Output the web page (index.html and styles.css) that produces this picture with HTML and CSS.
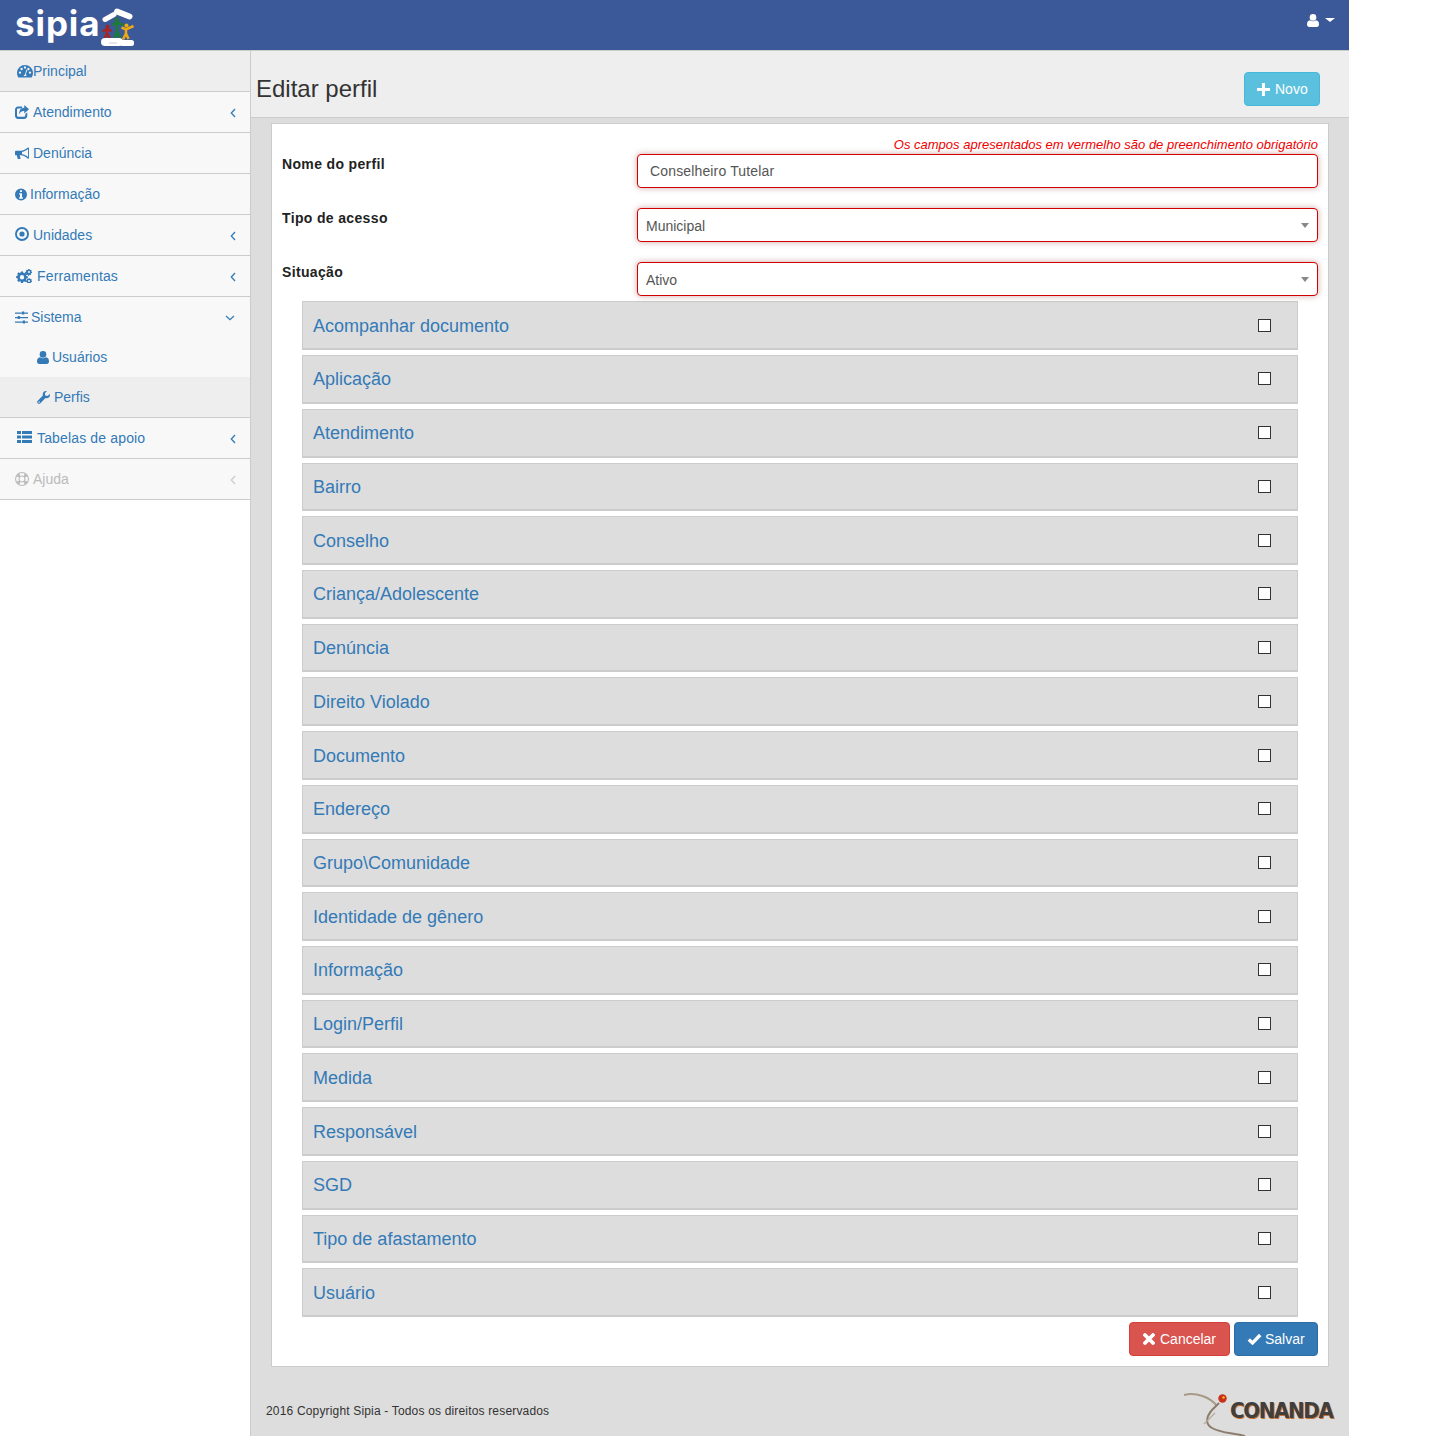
FILE: index.html
```html
<!DOCTYPE html>
<html lang="pt-BR">
<head>
<meta charset="utf-8">
<title>Editar perfil</title>
<link rel="stylesheet" href="styles.css">
</head>
<body>
<svg class="defs" width="0" height="0" aria-hidden="true">
  <symbol id="i-dash" viewBox="0 0 16 14"><path fill-rule="evenodd" d="M8 1a8 8 0 0 0-8 8c0 1.6.4 3 1.2 4.2.2.3.5.4.8.4h12c.3 0 .6-.1.8-.4C15.6 12 16 10.600 16 9a8 8 0 0 0-8-8zM3 9.800a1.200 1.200 0 1 1 0-2.400 1.200 1.200 0 0 1 0 2.400zm1.600-3.600a1.200 1.200 0 1 1 0-2.400 1.200 1.200 0 0 1 0 2.400zM8 4.600A1.200 1.200 0 1 1 8 2.200a1.200 1.200 0 0 1 0 2.400zm1.500 6.800a1.800 1.800 0 0 1-3 0l1.500-1 1.400-4.800 1 .3L8.900 10c.3.300.5.800.6 1.400zm1.900-5.200a1.200 1.200 0 1 1 0-2.400 1.200 1.200 0 0 1 0 2.400zm1.600 3.600a1.200 1.200 0 1 1 0-2.400 1.200 1.200 0 0 1 0 2.400z"/></symbol>
  <symbol id="i-share" viewBox="0 0 14 14"><path d="M3 1.500h4.200v2H3.200c-.7 0-1.200.5-1.200 1.200v5.900c0 .7.5 1.200 1.200 1.200h5.900c.7 0 1.200-.5 1.200-1.200V9l2-1.600v3.400c0 1.800-1.400 3.200-3.200 3.200H3c-1.700 0-3-1.400-3-3.200V4.700c0-1.800 1.300-3.200 3-3.200z"/><path d="M9.300 0 14 4.200 9.300 8.500V6.100C7 6 5.200 6.500 4.400 9.500 3.800 6 5.400 3 9.300 2.800z"/></symbol>
  <symbol id="i-horn" viewBox="0 0 15 13"><path fill-rule="evenodd" d="M13.800 0h.4c.4 0 .8.300.8.800v10.400c0 .5-.4.800-.8.800h-.4C11.500 10 9 8.700 6 8.500H5l.9 3.200c.1.400-.2.800-.6.800H3.500c-.3 0-.5-.2-.6-.4L1.900 8.500H1c-.6 0-1-.4-1-1v-3c0-.6.400-1 1-1h5c3 0 5.500-1.500 7.800-3.500zM14 1.800C12.300 3.200 10 4.500 7.500 4.800v2.400c2.500.3 4.800 1.600 6.500 3z"/></symbol>
  <symbol id="i-info" viewBox="0 0 14 14"><path fill-rule="evenodd" d="M7 0a7 7 0 1 1 0 14A7 7 0 0 1 7 0zM5.800 1.900v2.300h2.400V1.900zM4.800 5.600v1.500h1v3.200h-1v1.600h4.400v-1.600h-1V5.600z"/></symbol>
  <symbol id="i-dot" viewBox="0 0 14 14"><path fill-rule="evenodd" d="M7 0a7 7 0 1 1 0 14A7 7 0 0 1 7 0zm0 1.900a5.100 5.100 0 1 0 0 10.200A5.100 5.100 0 0 0 7 1.900zM7 4.400a2.600 2.600 0 1 1 0 5.200 2.600 2.600 0 0 1 0-5.200z"/></symbol>
  <symbol id="i-cogs" viewBox="0 0 16 14"><path fill-rule="evenodd" d="M5 2.500h2l.3 1.300.9.400 1.200-.7 1.400 1.400-.7 1.200.4.900 1.300.3v2l-1.300.3-.4.900.7 1.200-1.400 1.400-1.200-.7-.9.400L7 13.900H5l-.3-1.300-.9-.4-1.200.7-1.400-1.400.7-1.200-.4-.9L.2 9.100v-2l1.300-.3.4-.9-.7-1.200 1.400-1.400 1.200.7.9-.4zM6 6a2.200 2.200 0 1 0 0 4.400A2.200 2.200 0 0 0 6 6z"/><path fill-rule="evenodd" d="M12.500 0h1l.2.800.6.300.7-.4.700.7-.4.700.3.600.4.200v1l-.8.200-.3.600.4.700-.7.700-.7-.4-.6.300-.2.800h-1l-.2-.8-.6-.3-.7.4-.7-.7.4-.7-.3-.6-.8-.2v-1l.8-.2.3-.6-.4-.7.700-.7.700.4.600-.3zm.5 1.900a1 1 0 1 0 0 2 1 1 0 0 0 0-2zM12.500 9h1l.2.800.6.300.7-.4.700.7-.4.700.3.600.4.200v1l-.8.200-.3.600-.2.300h-3.400l-.2-.3-.3-.6-.8-.2v-1l.8-.2.3-.6-.4-.7.7-.7.7.4.6-.3zm.5 1.900a1 1 0 1 0 0 2 1 1 0 0 0 0-2z"/></symbol>
  <symbol id="i-sliders" viewBox="0 0 13 13"><path d="M0 1.500h7V.6h2.200v.9H13v1.200H9.200v.9H7v-.9H0zM0 6h2.700v-.9h2.200V6H13v1.200H4.900v.9H2.700v-.9H0zM0 10.500h7.800v-.9H10v.9h3v1.200h-3v.9H7.800v-.9H0z"/></symbol>
  <symbol id="i-user" viewBox="0 0 12 13"><circle cx="6" cy="3.400" r="3.300"/><path d="M3 6.300c.8.600 1.900 1 3 1s2.200-.4 3-1c2 .1 3 1.900 3 4.200 0 1.500-1 2.500-2.200 2.500H2.200C1 13 0 12 0 10.500c0-2.300 1-4.100 3-4.200z"/></symbol>
  <symbol id="i-wrench" viewBox="0 0 14 14"><path fill-rule="evenodd" d="M13.900 3.200c.3 1.600-.1 3-1.200 3.900-1.100.8-2.400 1-3.600.5L3.600 13.200c-.8.800-1.900.800-2.700 0l-.1-.1c-.8-.8-.8-1.900 0-2.700l5.600-5.500c-.5-1.200-.3-2.500.5-3.600C7.800.2 9.200-.2 10.700.1L8.500 2.300l.3 2.500 2.500.5zM2.300 11a.8.8 0 1 0 0 1.600.8.800 0 0 0 0-1.600z"/></symbol>
  <symbol id="i-list" viewBox="0 0 15 12"><path d="M0 0h4v3H0zM5 0h10v3H5zM0 4.500h4v3H0zM5 4.500h10v3H5zM0 9h4v3H0zM5 9h10v3H5z"/></symbol>
  <symbol id="i-ring" viewBox="0 0 14 14"><path fill-rule="evenodd" d="M7 0a7 7 0 1 1 0 14A7 7 0 0 1 7 0zM4.400 1.700 5.300 3.900a3.500 3.500 0 0 1 3.400 0l.9-2.200a6 6 0 0 0-5.200 0zM1.700 9.600 3.900 8.700a3.500 3.500 0 0 1 0-3.400l-2.200-.9a6 6 0 0 0 0 5.200zM9.600 12.300 8.700 10.100a3.500 3.500 0 0 1-3.400 0l-.9 2.200a6 6 0 0 0 5.200 0zM12.300 4.400l-2.200.9a3.500 3.500 0 0 1 0 3.400l2.200.9a6 6 0 0 0 0-5.200zM7 4.600a2.400 2.400 0 1 0 0 4.800 2.400 2.400 0 0 0 0-4.800z"/></symbol>
  <symbol id="i-plus" viewBox="0 0 13 13"><path d="M5 0h3v5h5v3H8v5H5V8H0V5h5z"/></symbol>
  <symbol id="i-x" viewBox="0 0 12 12"><path d="M2 2l8 8M10 2l-8 8" fill="none" stroke="#fff" stroke-width="3.800" stroke-linecap="round"/></symbol>
  <symbol id="i-check" viewBox="0 0 15 12"><path d="M1.800 6.500 5.500 10 13.200 2" fill="none" stroke="#fff" stroke-width="3.300"/></symbol>
  <symbol id="i-chev-l" viewBox="0 0 6 10"><path d="M5 1 1.300 5 5 9" fill="none" stroke="currentColor" stroke-width="1.300"/></symbol>
  <symbol id="i-chev-d" viewBox="0 0 10 6"><path d="M1 1l4 3.700L9 1" fill="none" stroke="currentColor" stroke-width="1.300"/></symbol>
</svg>

<div class="page">
  <header class="navbar">
    <a class="brand">
      <span class="brand-name">sipia</span>
      <svg class="brand-mark" width="36" height="38" viewBox="0 0 36 38" aria-hidden="true">
        <path d="M5 11.500 14 6.500" stroke="#fff" stroke-width="5" stroke-linecap="round" fill="none"/>
        <path d="M17 3.500 29.500 8.500" stroke="#fff" stroke-width="6" stroke-linecap="round" fill="none"/>
        <path d="M12 17 17 14.500 24 17M17 14.500V23L14.500 30M17 23 20 30" stroke="#1d7a3a" stroke-width="2.800" fill="none"/>
        <circle cx="17" cy="11.500" r="2.300" fill="#1d7a3a"/>
        <path d="M2.500 23.500 7 21 11.500 23M7 21V25.500L4.500 30M7 25.500 10 30" stroke="#a82424" stroke-width="2.500" fill="none"/>
        <circle cx="7.500" cy="18.500" r="2" fill="#a82424"/>
        <path d="M21.500 19.500 26 21.500 33.500 18M26 21V25.500L23 31.500M26 25.500 28.500 31" stroke="#eeaa11" stroke-width="2.500" fill="none"/>
        <circle cx="26.500" cy="17.500" r="2" fill="#eeaa11"/>
        <rect x="1" y="30" width="22" height="8" rx="4" fill="#fff"/>
        <rect x="20" y="32" width="14" height="6" rx="2.500" fill="#fff"/>
        <path d="M9 35h8" stroke="#c9d0dd" stroke-width="1"/>
      </svg>
    </a>
    <a class="user-menu">
      <svg class="ico-user" aria-hidden="true"><use href="#i-user"/></svg>
      <span class="caret"></span>
    </a>
  </header>

  <div class="layout">
    <nav class="sidebar">
      <ul class="menu">
        <li class="menu-item is-current"><a class="menu-link"><svg class="ico ico-dash"><use href="#i-dash"/></svg><span>Principal</span></a></li>
        <li class="menu-item"><a class="menu-link"><svg class="ico ico-share"><use href="#i-share"/></svg><span>Atendimento</span><svg class="chev"><use href="#i-chev-l"/></svg></a></li>
        <li class="menu-item"><a class="menu-link"><svg class="ico ico-horn"><use href="#i-horn"/></svg><span>Denúncia</span></a></li>
        <li class="menu-item"><a class="menu-link"><svg class="ico ico-info"><use href="#i-info"/></svg><span>Informação</span></a></li>
        <li class="menu-item"><a class="menu-link"><svg class="ico ico-dot"><use href="#i-dot"/></svg><span>Unidades</span><svg class="chev"><use href="#i-chev-l"/></svg></a></li>
        <li class="menu-item"><a class="menu-link"><svg class="ico ico-cogs"><use href="#i-cogs"/></svg><span class="text-wide">Ferramentas</span><svg class="chev"><use href="#i-chev-l"/></svg></a></li>
        <li class="menu-item">
          <a class="menu-link menu-open"><svg class="ico ico-sliders"><use href="#i-sliders"/></svg><span>Sistema</span><svg class="chev-d"><use href="#i-chev-d"/></svg></a>
          <ul class="submenu">
            <li><a class="sub-link"><svg class="ico ico-sub-user"><use href="#i-user"/></svg>Usuários</a></li>
            <li><a class="sub-link is-current"><svg class="ico ico-wrench"><use href="#i-wrench"/></svg>Perfis</a></li>
          </ul>
        </li>
        <li class="menu-item"><a class="menu-link"><svg class="ico ico-list"><use href="#i-list"/></svg><span class="text-wide">Tabelas de apoio</span><svg class="chev"><use href="#i-chev-l"/></svg></a></li>
        <li class="menu-item is-muted"><a class="menu-link"><svg class="ico ico-ring"><use href="#i-ring"/></svg><span>Ajuda</span><svg class="chev"><use href="#i-chev-l"/></svg></a></li>
      </ul>
    </nav>

    <main class="content">
      <div class="page-head">
        <h1 class="page-title">Editar perfil</h1>
        <a class="btn btn-info"><svg class="btn-ico ico-plus"><use href="#i-plus"/></svg>Novo</a>
      </div>

      <section class="card">
        <p class="required-note">Os campos apresentados em vermelho são de preenchimento obrigatório</p>
        <div class="field">
          <label class="field-label">Nome do perfil</label>
          <div class="control control-text">Conselheiro Tutelar</div>
        </div>
        <div class="field">
          <label class="field-label">Tipo de acesso</label>
          <div class="control control-select">Municipal<span class="select-arrow"></span></div>
        </div>
        <div class="field field-last">
          <label class="field-label">Situação</label>
          <div class="control control-select">Ativo<span class="select-arrow"></span></div>
        </div>

        <div class="modules">
          <div class="module"><a class="module-name">Acompanhar documento</a><span class="check"></span></div>
          <div class="module"><a class="module-name">Aplicação</a><span class="check"></span></div>
          <div class="module"><a class="module-name">Atendimento</a><span class="check"></span></div>
          <div class="module"><a class="module-name">Bairro</a><span class="check"></span></div>
          <div class="module"><a class="module-name">Conselho</a><span class="check"></span></div>
          <div class="module"><a class="module-name">Criança/Adolescente</a><span class="check"></span></div>
          <div class="module"><a class="module-name">Denúncia</a><span class="check"></span></div>
          <div class="module"><a class="module-name">Direito Violado</a><span class="check"></span></div>
          <div class="module"><a class="module-name">Documento</a><span class="check"></span></div>
          <div class="module"><a class="module-name">Endereço</a><span class="check"></span></div>
          <div class="module"><a class="module-name">Grupo\Comunidade</a><span class="check"></span></div>
          <div class="module"><a class="module-name">Identidade de gênero</a><span class="check"></span></div>
          <div class="module"><a class="module-name">Informação</a><span class="check"></span></div>
          <div class="module"><a class="module-name">Login/Perfil</a><span class="check"></span></div>
          <div class="module"><a class="module-name">Medida</a><span class="check"></span></div>
          <div class="module"><a class="module-name">Responsável</a><span class="check"></span></div>
          <div class="module"><a class="module-name">SGD</a><span class="check"></span></div>
          <div class="module"><a class="module-name">Tipo de afastamento</a><span class="check"></span></div>
          <div class="module"><a class="module-name">Usuário</a><span class="check"></span></div>
        </div>

        <div class="actions">
          <a class="btn btn-danger"><svg class="btn-ico ico-x"><use href="#i-x"/></svg>Cancelar</a>
          <a class="btn btn-primary"><svg class="btn-ico ico-check"><use href="#i-check"/></svg>Salvar</a>
        </div>
      </section>

      <footer class="footer">
        <span class="copyright">2016 Copyright Sipia - Todos os direitos reservados</span>
        <div class="conanda">
          <svg class="conanda-mark" width="66" height="44" viewBox="0 0 66 44" aria-hidden="true">
            <path d="M0 3C12 0 26 5 33 14" fill="none" stroke="#a89a85" stroke-width="2"/>
            <path d="M35 11 28 18C22 25 21 32 28 36 36 41 50 41 61 44" fill="none" stroke="#8b7d6b" stroke-width="2"/>
            <path d="M31 21 20 32" fill="none" stroke="#b5ab9a" stroke-width="1.200"/>
            <circle cx="38.500" cy="6.500" r="4.200" fill="#c9301c"/>
            <circle cx="39.500" cy="5.500" r="1.200" fill="#f0c020"/>
          </svg>
          <span class="conanda-name">CONANDA</span>
        </div>
      </footer>
    </main>
  </div>
</div>
</body>
</html>
```

FILE: styles.css
```css
* { box-sizing: border-box; }
html, body { margin: 0; padding: 0; background: #fff; }
body { font-family: "Liberation Sans", Arial, sans-serif; font-size: 14px; color: #333; line-height: 20px; }
a { color: #337ab7; text-decoration: none; }
ul { list-style: none; margin: 0; padding: 0; }
.defs { position: absolute; }

.page { width: 1349px; height: 1436px; overflow: hidden; background: #ddd; }

/* navbar */
.navbar { height: 51px; background: #3b5998; border-bottom: 1px solid #ccc; display: flex; justify-content: space-between; padding: 0 14px 0 15px; }
.brand { display: flex; align-items: flex-start; color: #fff; }
.brand-name { font-family: "Inter", sans-serif; font-weight: 700; font-size: 35px; line-height: 46px; letter-spacing: .9px; width: 85px; white-space: nowrap; }
.brand-mark { margin: 8px 0 0 0; flex: none; }
.user-menu { display: flex; align-items: center; height: 40px; color: #fff; gap: 6px; }
.ico-user { width: 12px; height: 13px; fill: #fff; }
.caret { width: 0; height: 0; border-top: 4px solid #fff; border-left: 5px solid transparent; border-right: 5px solid transparent; }

/* layout */
.layout { display: flex; height: 1385px; }
.sidebar { width: 251px; flex: none; background: #fff; border-right: 1px solid #ccc; }
.menu-item { border-bottom: 1px solid #ccc; background: #f8f8f8; }
.menu-link { display: flex; align-items: center; height: 40px; padding: 0 15px; position: relative; }
.menu-item.is-current { background: #eee; }
.is-muted .menu-link { color: #bbb; }
.text-wide { letter-spacing: .15px; }
.ico { fill: currentColor; flex: none; }
.ico-dash { width: 16px; height: 14px; margin: 0 0 0 2px; }
.ico-share { width: 14px; height: 14px; margin-right: 4px; margin-top: -1px; }
.ico-horn { width: 14px; height: 13px; margin-right: 4px; }
.ico-info { width: 12px; height: 13px; margin-right: 3px; }
.ico-dot { width: 14px; height: 14px; margin-right: 4px; margin-top: -2px; }
.ico-cogs { width: 16px; height: 14px; margin: 0 5px 0 1px; }
.ico-sliders { width: 13px; height: 13px; margin-right: 3px; }
.ico-list { width: 15px; height: 12px; margin: -2px 5px 0 2px; }
.ico-ring { width: 14px; height: 14px; margin-right: 4px; }
.chev { width: 6px; height: 10px; color: #337ab7; position: absolute; right: 14px; top: 16px; }
.is-muted .chev { color: #ccc; }
.chev-d { width: 10px; height: 6px; color: #337ab7; position: absolute; right: 15px; top: 18px; }
.submenu { background: #f8f8f8; }
.sub-link { display: flex; align-items: center; height: 40px; padding-left: 37px; }
.sub-link.is-current { background: #eee; }
.ico-sub-user { width: 12px; height: 13px; margin-right: 3px; }
.ico-wrench { width: 13px; height: 13px; margin: 0 4px 0 0; }

/* content */
.content { flex: 1; min-width: 0; }
.page-head { height: 67px; background: #eee; border-bottom: 1px solid #ccc; display: flex; justify-content: space-between; align-items: flex-start; padding: 21px 29px 0 5px; }
.page-title { margin: 0; font-size: 24px; font-weight: 400; line-height: 34px; color: #333; }
.btn { display: inline-flex; align-items: center; height: 34px; border: 1px solid; border-radius: 4px; color: #fff; font-size: 14px; }
.btn-ico { fill: #fff; flex: none; }
.btn-info { background: #5bc0de; border-color: #46b8da; padding: 0 12px; width: 76px; }
.ico-plus { width: 13px; height: 13px; margin-right: 5px; }
.btn-danger { background: #d9534f; border-color: #d43f3a; padding: 0 0 0 13px; width: 101px; }
.ico-x { width: 12px; height: 12px; margin-right: 5px; }
.btn-primary { background: #337ab7; border-color: #2e6da4; padding: 0 12px; width: 84px; }
.ico-check { width: 15px; height: 12px; margin-right: 3px; }

.card { width: 1058px; height: 1244px; margin: 5px 0 0 20px; background: #fff; border: 1px solid #ccc; padding: 10px; }
.required-note { margin: 0; height: 20px; text-align: right; font-style: italic; font-size: 13px; line-height: 21px; color: #f00000; }
.field { display: grid; grid-template-columns: 355px 681px; height: 54px; }
.field-last { height: 39.4px; }
.field-label { font-weight: 700; font-size: 14px; letter-spacing: .35px; line-height: 20px; color: #222; margin-top: 0; }
.control { height: 34px; background: #fff; border: 1px solid #d00000; border-radius: 4px; box-shadow: 0 0 6px rgba(150, 60, 60, .45); font-size: 14px; line-height: 32px; color: #555; position: relative; }
.control-text { padding-left: 12px; letter-spacing: .15px; }
.control-select { padding-left: 8px; line-height: 34px; }
.select-arrow { position: absolute; right: 8px; top: 14px; width: 0; height: 0; border-top: 5px solid #888; border-left: 4px solid transparent; border-right: 4px solid transparent; }

.modules { margin-left: 20px; width: 996px; }
.module { height: 48.72px; margin-bottom: 5px; background: #ddd; border: 1px solid #ccc; border-bottom-width: 2px; display: flex; align-items: center; justify-content: space-between; padding: 1px 26px 0 10px; }
.module-name { font-size: 18px; line-height: 24px; color: #337ab7; }
.check { width: 13px; height: 13px; margin-top: -1px; background: #fff; border: 1px solid #333; flex: none; }

.actions { display: flex; justify-content: flex-end; gap: 4px; }

.footer { display: flex; justify-content: space-between; align-items: flex-start; height: 69px; padding: 25px 15px 0 15px; }
.copyright { font-size: 12px; line-height: 39px; letter-spacing: .17px; color: #333; }
.conanda { display: flex; align-items: flex-start; margin-left: auto; }
.conanda-mark { flex: none; }
.conanda-name { font-family: "DejaVu Sans Condensed", "DejaVu Sans", sans-serif; font-weight: 700; font-size: 22px; line-height: 24px; color: #3f3f3f; text-shadow: 1px 1px 0 #c9712f; letter-spacing: -1.3px; width: 104px; white-space: nowrap; margin: 7px 0 0 -20px; }
```
